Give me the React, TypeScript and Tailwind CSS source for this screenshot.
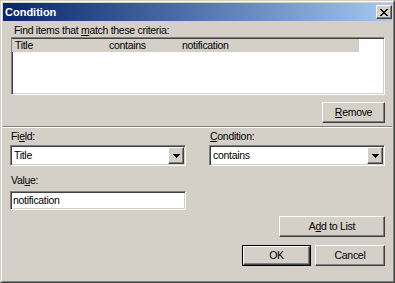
const raised =
  "border border-t-white border-l-white border-r-[#404040] border-b-[#404040] shadow-[inset_-1px_-1px_0_#808080,inset_1px_1px_0_#d4d0c8]";
const sunken =
  "border border-t-[#808080] border-l-[#808080] border-r-white border-b-white shadow-[inset_1px_1px_0_#404040,inset_-1px_-1px_0_#d4d0c8]";

function DropArrow() {
  return (
    <svg width="7" height="4" viewBox="0 0 7 4" shapeRendering="crispEdges">
      <path d="M0 0h7v1H0zM1 1h5v1H1zM2 2h3v1H2zM3 3h1v1H3z" fill="#000" />
    </svg>
  );
}

function Combo({ value }: { value: string }) {
  return (
    <div className={`${sunken} flex h-[21px] items-stretch bg-white p-[1px]`}>
      <span className="flex flex-1 items-center pl-[2px]">{value}</span>
      <span className={`${raised} flex w-[16px] items-center justify-center bg-[#d4d0c8]`}>
        <DropArrow />
      </span>
    </div>
  );
}

function Button({ children, className = "" }: { children: React.ReactNode; className?: string }) {
  return (
    <button className={`${raised} flex h-[21px] items-center justify-center bg-[#d4d0c8] ${className}`}>
      {children}
    </button>
  );
}

export default function App() {
  return (
    <div className="h-[283px] w-[395px] border border-t-[#d4d0c8] border-l-[#d4d0c8] border-r-[#404040] border-b-[#404040] bg-[#d4d0c8] font-['Liberation_Sans',Arial,sans-serif] text-[10.5px] leading-[13px] tracking-[-0.3px] text-black">
      <div className="flex h-full flex-col border border-t-white border-l-white border-r-[#808080] border-b-[#808080] p-px">
        <div className="flex h-[18px] items-center justify-between bg-linear-to-r from-[#0a246a] to-[#a6caf0] pl-[2px]">
          <span className="text-[11px] font-bold tracking-normal text-white">Condition</span>
          <span className={`${raised} flex h-[14px] w-[16px] items-center justify-center bg-[#d4d0c8]`}>
            <svg width="8" height="7" viewBox="0 0 8 7" shapeRendering="crispEdges">
              <path
                d="M0 0h2v1H0zM6 0h2v1H6zM1 1h2v1H1zM5 1h2v1H5zM2 2h4v1H2zM3 3h2v1H3zM2 4h4v1H2zM1 5h2v1H1zM5 5h2v1H5zM0 6h2v1H0zM6 6h2v1H6z"
                fill="#000"
              />
            </svg>
          </span>
        </div>

        <div className="flex flex-col px-[7px]">
          <span className="mt-[3px] pl-[4px]">
            Find items that <u>m</u>atch these criteria:
          </span>
          <div className={`${sunken} ml-[1px] h-[58px] bg-white pt-[1px]`}>
            <div className="flex w-[347px] bg-[#d4d0c8]">
              <span className="w-[94px] pl-[3px]">Title</span>
              <span className="w-[73px] pl-[3px]">contains</span>
              <span className="pl-[3px]">notification</span>
            </div>
          </div>

          <Button className="mt-[7px] w-[63px] self-end">
            <u>R</u>emove
          </Button>

          <div className="-mx-[7px] mt-[3px] h-[2px] border-t border-t-[#808080] border-b border-b-white" />

          <div className="grid grid-cols-[176px_176px] gap-x-[23px]">
            <div className="flex flex-col">
              <span className="mt-[2px] pl-px">
                Fi<u>e</u>ld:
              </span>
              <div className="mt-[2px]">
                <Combo value="Title" />
              </div>
              <span className="mt-[8px] pl-px">
                Val<u>u</u>e:
              </span>
              <div className={`${sunken} mt-[4px] flex h-[19px] items-center bg-white pl-[2px]`}>
                notification
              </div>
            </div>
            <div className="flex flex-col">
              <span className="mt-[2px] pl-px">
                <u>C</u>ondition:
              </span>
              <div className="mt-[2px]">
                <Combo value="contains" />
              </div>
            </div>
          </div>

          <Button className="mt-[6px] w-[106px] self-end">
            A<u>d</u>d to List
          </Button>

          <div className="mt-[8px] flex justify-end gap-[4px]">
            <div className="h-[21px] w-[69px] border border-black">
              <Button className="h-full w-full">OK</Button>
            </div>
            <Button className="w-[70px]">Cancel</Button>
          </div>
        </div>
      </div>
    </div>
  );
}
